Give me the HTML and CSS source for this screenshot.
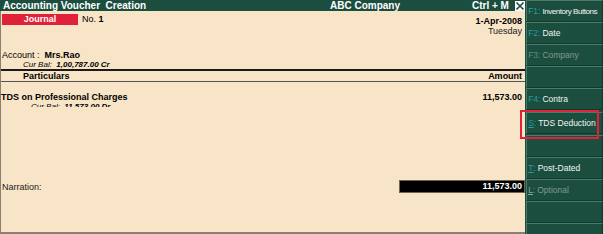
FILE: index.html
```html
<!DOCTYPE html>
<html>
<head>
<meta charset="utf-8">
<link rel="stylesheet" href="styles.css">
</head>
<body>
<div class="app">
  <div class="main">
    <div class="titlebar">
      <span class="t-left">Accounting Voucher&nbsp; Creation</span>
      <span class="t-mid">ABC Company</span>
      <span class="t-right">Ctrl + M</span>
      <span class="t-close"><svg width="10" height="10" viewBox="0 0 10 10"><path d="M1.5 1.5 L8.5 8.5 M8.5 1.5 L1.5 8.5" stroke="#1b4e3f" stroke-width="1.6"/></svg></span>
    </div>
    <div class="body">
      <div class="row head-row">
        <div class="left">
          <span class="vtype">Journal</span>
          <span class="vno">No. <b>1</b></span>
        </div>
        <div class="date">
          <div class="d1">1-Apr-2008</div>
          <div class="d2">Tuesday</div>
        </div>
      </div>
      <div class="account">Account :&nbsp; <b>Mrs.Rao</b></div>
      <div class="curbal">Cur Bal:&nbsp; <b>1,00,787.00 Cr</b></div>
      <div class="colhead">
        <span class="ch-l">Particulars</span>
        <span class="ch-r">Amount</span>
      </div>
      <div class="entry">
        <span class="e-l">TDS on Professional Charges</span>
        <span class="e-r">11,573.00</span>
      </div>
      <div class="ebal-clip"><div class="ebal">Cur Bal:&nbsp; <b>11,573.00 Dr</b></div></div>
      <div class="spacer"></div>
      <div class="narr-row">
        <span class="narr">Narration:</span>
        <span class="total">11,573.00</span>
      </div>
    </div>
  </div>
  <div class="side">
    <div class="btn"><span class="k">F1:</span> <span class="lbl sm">Inventory Buttons</span></div>
    <div class="btn"><span class="k">F2:</span> <span class="lbl">Date</span></div>
    <div class="btn dis"><span class="k">F3:</span> <span class="lbl">Company</span></div>
    <div class="btn"></div>
    <div class="btn"><span class="k">F4:</span> <span class="lbl">Contra</span></div>
    <div class="btn sel"><span class="k u">S</span><span class="k">:</span> <span class="lbl">TDS Deduction</span></div>
    <div class="btn"></div>
    <div class="btn"><span class="k u">T</span><span class="k">:</span> <span class="lbl">Post-Dated</span></div>
    <div class="btn dis"><span class="k u">L</span><span class="k">:</span> <span class="lbl">Optional</span></div>
    <div class="btn"></div>
    <div class="btn"></div>
  </div>
</div>
</body>
</html>
```
FILE: styles.css
```css
html, body { margin: 0; padding: 0; }
body {
  width: 603px; height: 234px; overflow: hidden;
  font-family: "Liberation Sans", Arial, sans-serif;
  font-size: 9px; color: #000;
  background: #1b4e3f;
}
.app { display: flex; height: 234px; }
.main {
  width: 525px; height: 232px;
  background: #f8e4c7;
  border-left: 1px solid #8a8070;
  border-bottom: 2px solid #8a8070;
  display: flex; flex-direction: column;
}
.titlebar {
  height: 11px; background: #1b4e3f; color: #fff;
  display: flex; align-items: center;
  font-size: 10px; font-weight: bold; line-height: 11px;
  margin-left: -1px; padding-left: 3px;
}
.t-left { width: 327px; }
.t-mid { width: 142px; }
.t-right { width: 43px; }
.t-close {
  width: 10px; height: 10px; background: #fff;
  display: flex;
}
.body { flex: 1; display: flex; flex-direction: column; padding-right: 3px; }
.head-row { display: flex; justify-content: space-between; margin-top: 3px; }
.left { display: flex; align-items: center; height: 11px; }
.vtype {
  width: 76px; height: 11px; margin-left: 1px;
  background: #e0213a; color: #fff; font-weight: bold;
  text-align: center; line-height: 11px; font-size: 9px;
}
.vno { margin-left: 4px; line-height: 11px; }
.date { text-align: right; line-height: 10px; margin-top: 2px; }
.d1 { font-weight: bold; }
.d2 { font-size: 9px; color: #222; }
.account { margin-top: 14px; margin-left: 1px; line-height: 10px; }
.curbal { margin-left: 22px; font-style: italic; line-height: 9px; font-size: 8px; }
.colhead {
  display: flex; justify-content: space-between;
  border-top: 2px solid #1a1a1a; border-bottom: 1px solid #555;
  margin-top: 0; margin-right: -3px; padding-right: 3px;
  height: 10px; line-height: 10px; font-weight: bold;
}
.ch-l { margin-left: 22px; }
.entry {
  display: flex; justify-content: space-between;
  margin-top: 10px; line-height: 10px; font-weight: bold;
}
.ebal-clip { height: 5px; overflow: hidden; }
.ebal { margin-left: 30px; font-style: italic; font-size: 8px; line-height: 9px; }
.spacer { flex: 0 0 73px; }
.narr-row { display: flex; justify-content: space-between; align-items: center; height: 13px; }
.narr { margin-left: 1px; color: #222; }
.total {
  width: 122px; height: 11px; background: #000; color: #fff;
  border: 1px solid #6d6550;
  text-align: right; font-weight: bold; line-height: 11px; padding-right: 2px;
  margin-right: -3px;
}
.side {
  width: 77px; display: flex; flex-direction: column;
  padding-top: 0; margin-left: 1px;
}
.btn {
  flex-shrink: 0;
  height: 20px; border: 1px solid #4c7a69; border-right-color: #0f3a2d; border-bottom-color: #0f3a2d;
  background: #1b4e3f; color: #f4f4f4;
  display: flex; align-items: center; padding-left: 1px;
  font-size: 8.5px; white-space: nowrap;
}
.btn .k { color: #2a9a9a; }
.btn .u { text-decoration: underline; }
.btn .lbl { margin-left: 2px; }
.btn .sm { font-size: 8px; letter-spacing: -0.45px; }
.btn.dis .lbl { color: #7f9a8e; }
.btn.dis .k { color: #6e8a80; }
.btn.dis .u { color: #8aa; }
.sel { position: relative; margin: 2px 0 1px; }
.sel::after {
  content: ""; position: absolute;
  left: -7px; right: 3px; top: -3px; bottom: -6px;
  border: 2px solid #e0213a;
}
```
